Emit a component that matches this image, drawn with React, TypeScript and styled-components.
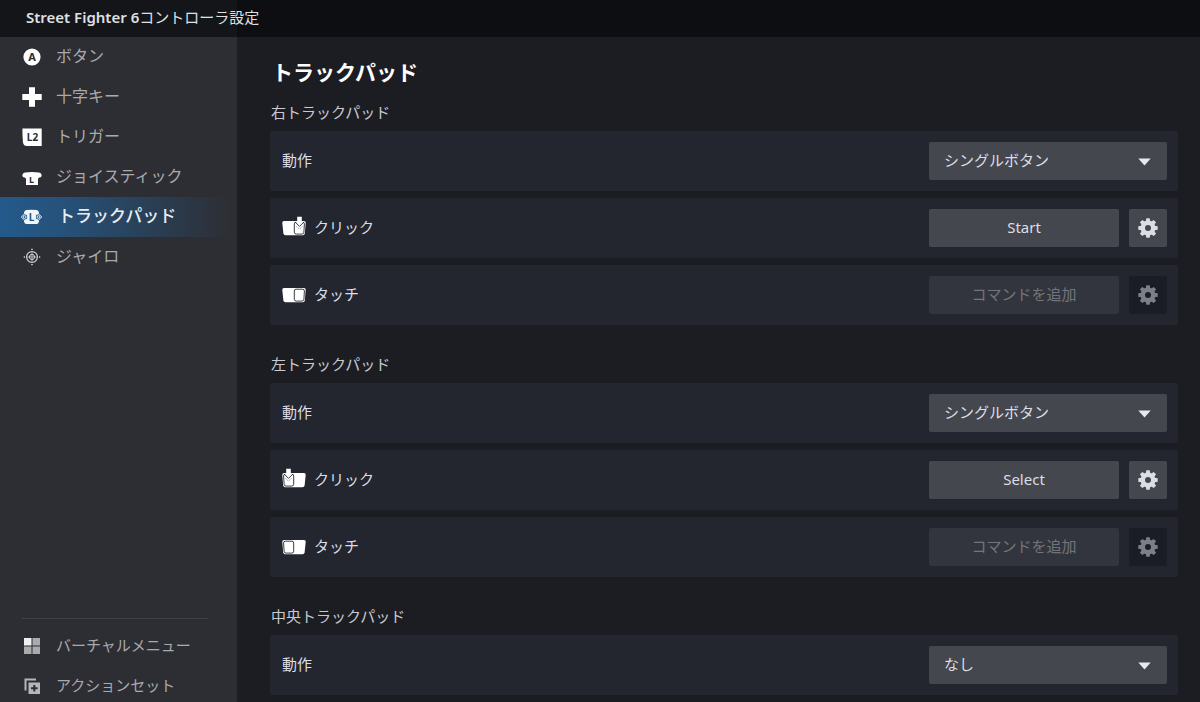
import React, { useId, useState } from "react";
import styled, { createGlobalStyle } from "styled-components";

const GlobalStyle = createGlobalStyle`
  *, *::before, *::after { box-sizing: border-box; }
  body {
    margin: 0;
    background: #1c1d22;
    color: #dcdee3;
    font-family: "Noto Sans", "Noto Sans CJK JP", sans-serif;
    font-size: 15px;
    line-height: 24px;
  }
  button, select { font: inherit; color: inherit; }
`;

const Shell = styled.div`
  display: flex;
  flex-direction: column;
  height: 100vh;
`;

const TitleBar = styled.header`
  flex: none;
  display: flex;
  align-items: center;
  height: 37px;
  padding: 0 26px 3px;
  background: linear-gradient(to right, #141519 237px, #0d0e11 237px);
`;

const AppTitle = styled.p`
  margin: 0;
  color: #dfe0e3;
`;

const GameName = styled.span`
  font-weight: 600;
`;

const Body = styled.div`
  flex: 1;
  display: flex;
  min-height: 0;
`;

const Sidebar = styled.nav`
  flex: none;
  display: flex;
  flex-direction: column;
  justify-content: space-between;
  width: 237px;
  background: #2d2e33;
`;

const NavList = styled.ul`
  margin: 0;
  padding: 0;
  list-style: none;
`;

const FooterList = styled(NavList)`
  display: grid;
  gap: 8px;
  margin: 0 29px 0 22px;
  padding-top: 11px;
  border-top: 1px solid #404146;
`;

const NavLink = styled.a<{ $active?: boolean; $compact?: boolean }>`
  display: flex;
  align-items: center;
  gap: ${(p) => (p.$active ? 16 : 14)}px;
  height: ${(p) => (p.$compact ? 32 : 40)}px;
  padding-left: ${(p) => (p.$compact ? 0 : 22)}px;
  color: ${(p) => (p.$active ? "#e6edf3" : "#a9aaae")};
  font-size: ${(p) => (p.$active ? 17 : p.$compact ? 15 : 16)}px;
  font-weight: ${(p) => (p.$active ? 500 : 400)};
  background: ${(p) =>
    p.$active ? "linear-gradient(to right, #235a8b 0, #26527b 60px, #2d2e33 232px)" : "none"};
  text-decoration: none;
  white-space: nowrap;
  svg { flex: none; }
`;

const NavText = styled.span`
  padding-bottom: 2px;
`;

const Content = styled.main`
  flex: 1;
  min-width: 0;
  padding: 20px 22px 7px 33px;
  overflow: auto;
  scrollbar-width: none;
`;

const PageTitle = styled.h1`
  margin: 0 0 13px 2px;
  color: #fff;
  font-size: 21px;
  font-weight: 700;
  line-height: 30px;
`;

const Section = styled.section`
  & + & { margin-top: 27px; }
`;

const SectionTitle = styled.h2`
  margin: 0 0 7px 1px;
  color: #c9cad0;
  font-size: 15px;
  font-weight: 400;
  line-height: 24px;
`;

const Rows = styled.div`
  display: grid;
  gap: 7px;
`;

const Row = styled.div`
  display: flex;
  align-items: center;
  justify-content: space-between;
  height: 60px;
  padding: 0 11px 0 12px;
  border-radius: 2px;
  background: #23262f;
`;

const ModeLabel = styled.label`
  padding-bottom: 2px;
`;

const RowLabel = styled.span`
  display: flex;
  align-items: center;
  gap: 8px;
  padding-bottom: 2px;
`;

const Controls = styled.div`
  display: flex;
  gap: 10px;
`;

const SelectWrap = styled.div`
  position: relative;
  width: 238px;
  svg {
    position: absolute;
    right: 16px;
    top: 16px;
    pointer-events: none;
  }
`;

const Select = styled.select`
  appearance: none;
  display: block;
  width: 100%;
  height: 38px;
  padding: 0 40px 2px 15px;
  border: 0;
  border-radius: 2px;
  background: #45474e;
`;

const CommandButton = styled.button`
  width: 190px;
  height: 38px;
  padding: 0 0 2px;
  border: 0;
  border-radius: 2px;
  background: #45474e;
  &:disabled {
    background: #32353d;
    color: #73757c;
  }
`;

const GearButton = styled(CommandButton)`
  display: grid;
  place-items: center;
  width: 38px;
  padding: 0;
  &:disabled {
    background: #1b1d26;
    color: #7d7f87;
  }
`;

function Gear() {
  return (
    <svg width="20" height="20" viewBox="-10 -10 20 20" fill="currentColor" aria-hidden="true">
      <circle r="5.2" fill="none" stroke="currentColor" strokeWidth="4.4" />
      {[0, 45, 90, 135, 180, 225, 270, 315].map((a) => (
        <path key={a} d="M-2.2-6.5-1.7-9.7H1.7L2.2-6.5Z" transform={`rotate(${a})`} />
      ))}
    </svg>
  );
}

function Letter({ x, y, size, fill = "#2d2e33", children }: { x: number; y: number; size: number; fill?: string; children: string }) {
  return (
    <text x={x} y={y} fontSize={size} fontWeight="700" textAnchor="middle" fill={fill} fontFamily="Noto Sans, sans-serif">
      {children}
    </text>
  );
}

const iconBox = { width: 20, height: 20, viewBox: "0 0 20 20", "aria-hidden": true } as const;

const ButtonIcon = () => (
  <svg {...iconBox}>
    <circle cx="10" cy="10" r="8.6" fill="#fff" />
    <Letter x={10} y={14} size={11}>A</Letter>
  </svg>
);

const DpadIcon = () => (
  <svg {...iconBox}>
    <path fill="#fff" d="M7 .3h6V7h6.7v6H13v6.7H7V13H.3V7H7Z" />
  </svg>
);

const TriggerIcon = () => (
  <svg {...iconBox}>
    <path fill="#fff" d="M.4 1.5h19.3v17.500H5Q1.600 19 1 15.500Q.4 10 .4 1.500Z" />
    <Letter x={10.5} y={14} size={10}>L2</Letter>
  </svg>
);

const StickIcon = () => (
  <svg {...iconBox}>
    <path
      fill="#fff"
      d="M3 5.500Q10 4.300 17 5.500Q19.700 6 19.700 8.300Q19.600 10.500 17.500 10.600Q16 10.800 16 12.500V18H4V12.500Q4 10.800 2.500 10.600Q.4 10.500.3 8.300Q.3 6 3 5.500Z"
    />
    <Letter x={9.500} y={15.500} size={9}>L</Letter>
  </svg>
);

const PadIcon = () => (
  <svg {...iconBox} overflow="visible">
    <path fill="#f1f7fc" d="M4.500 3Q9 2.500 14.500 3Q16.500 3.200 17 5.500V14.500Q16.500 17 14.500 17H4.500Q2.500 17 2 14.500V5.500Q2.500 3.200 4.500 3Z" />
    <g fill="#35628a" stroke="#e4eef7" strokeWidth="0.900">
      <path d="M2.500 6.800 5.500 8V12L2.500 13.200-.8 10Z" />
      <path d="M16.500 6.800 13.500 8V12L16.500 13.200 19.800 10Z" />
    </g>
    <g fill="none" stroke="#e4eef7" strokeWidth="0.900">
      <circle cx="2.500" cy="10" r="1.400" />
      <circle cx="16.500" cy="10" r="1.400" />
    </g>
    <Letter x={9.500} y={13.500} size={10} fill="#245681">L</Letter>
  </svg>
);

const GyroIcon = () => (
  <svg {...iconBox} fill="none" stroke="#d2d3d6">
    <circle cx="10" cy="10" r="5.400" strokeWidth="1.200" />
    <circle cx="10" cy="10" r="2.600" strokeWidth="1" />
    <path strokeWidth="0.800" d="M10 5.500V14.500M5.500 10H14.500" />
    <g fill="#d2d3d6" stroke="none">
      <path d="M10 1.200 11.100 3H8.900ZM10 18.800 8.900 17H11.100ZM1.200 10 3 8.900V11.100ZM18.800 10 17 11.100V8.900Z" />
    </g>
  </svg>
);

const MenuIcon = () => (
  <svg {...iconBox} fill="#a9aaae">
    <path fill="#f0f0f1" d="M2 2h7.500v7.500H2Z" />
    <path d="M10.500 2H18v7.500H10.500ZM2 10.500H9.500V18H2ZM10.500 10.500H18V18H10.500Z" />
  </svg>
);

const SetIcon = () => (
  <svg {...iconBox}>
    <path fill="none" stroke="#b5b6b9" strokeWidth="2" d="M3.500 14.500V3.500H14" />
    <path fill="#b5b6b9" fillRule="evenodd" d="M6.500 6.500H18V18H6.500ZM11.300 9V11.300H9V13.300H11.300V15.600H13.300V13.300H15.600V11.300H13.300V9Z" />
  </svg>
);

function TrackpadGlyph({ side, press }: { side: "left" | "right"; press?: boolean }) {
  return (
    <svg width="24" height="22" viewBox="0 0 24 22" aria-hidden="true">
      <g transform={side === "left" ? "translate(24 0) scale(-1 1)" : undefined}>
        <path fill="#fff" d="M2 5H22Q23.800 5 23.700 7L22.800 17.500Q22.600 19.300 20.800 19.300H3.500Q1.700 19.300 1.400 17.500L.3 7Q.1 5 2 5Z" />
        <path
          fill="#fff"
          stroke="#23262f"
          strokeWidth="0.900"
          d="M14 6.200H20.500Q22.500 6.200 22.400 8L21.900 16.200Q21.700 18.100 19.900 18.100H14.300Q12.300 18.100 12.300 16.200V8Q12.300 6.200 14 6.200Z"
        />
        {press && (
          <>
            <path fill="#fff" d="M15.200.8H19.800V5.200H22.200L17.500 10 12.800 5.200H15.200Z" />
            <path fill="none" stroke="#23262f" strokeWidth="0.900" d="M13 5.900 17.500 10.400 22 5.900" />
            <path fill="none" stroke="#6c6e76" strokeWidth="0.800" strokeDasharray="1.200 1" d="M14.500 10.500 17.500 13 20.500 10.500" />
          </>
        )}
      </g>
    </svg>
  );
}

function ModeRow({ initial }: { initial: string }) {
  const id = useId();
  const [mode, setMode] = useState(initial);
  return (
    <Row>
      <ModeLabel htmlFor={id}>動作</ModeLabel>
      <SelectWrap>
        <Select id={id} value={mode} onChange={(e) => setMode(e.target.value)}>
          <option>シングルボタン</option>
          <option>なし</option>
        </Select>
        <svg width="13" height="8" viewBox="0 0 13 8" aria-hidden="true">
          <path fill="#e8e9ee" d="M.3.500H12.700L6.500 7.500Z" />
        </svg>
      </SelectWrap>
    </Row>
  );
}

function CommandRow({ side, press, label, command }: { side: "left" | "right"; press?: boolean; label: string; command?: string }) {
  return (
    <Row>
      <RowLabel>
        <TrackpadGlyph side={side} press={press} />
        {label}
      </RowLabel>
      <Controls>
        <CommandButton type="button" disabled={!command}>{command ?? "コマンドを追加"}</CommandButton>
        <GearButton type="button" aria-label={`${label} 設定`} disabled={!command}>
          <Gear />
        </GearButton>
      </Controls>
    </Row>
  );
}

const inputs = [
  { label: "ボタン", Icon: ButtonIcon },
  { label: "十字キー", Icon: DpadIcon },
  { label: "トリガー", Icon: TriggerIcon },
  { label: "ジョイスティック", Icon: StickIcon },
  { label: "トラックパッド", Icon: PadIcon, active: true },
  { label: "ジャイロ", Icon: GyroIcon },
];

const extras = [
  { label: "バーチャルメニュー", Icon: MenuIcon },
  { label: "アクションセット", Icon: SetIcon },
];

export default function App() {
  return (
    <>
      <GlobalStyle />
      <Shell>
        <TitleBar>
          <AppTitle>
            <GameName>Street Fighter 6</GameName>コントローラ設定
          </AppTitle>
        </TitleBar>
        <Body>
          <Sidebar>
            <NavList>
              {inputs.map(({ label, Icon, active }) => (
                <li key={label}>
                  <NavLink href="#" $active={active} aria-current={active ? "page" : undefined}>
                    <Icon />
                    <NavText>{label}</NavText>
                  </NavLink>
                </li>
              ))}
            </NavList>
            <FooterList>
              {extras.map(({ label, Icon }) => (
                <li key={label}>
                  <NavLink href="#" $compact>
                    <Icon />
                    <NavText>{label}</NavText>
                  </NavLink>
                </li>
              ))}
            </FooterList>
          </Sidebar>
          <Content>
            <PageTitle>トラックパッド</PageTitle>
            <Section>
              <SectionTitle>右トラックパッド</SectionTitle>
              <Rows>
                <ModeRow initial="シングルボタン" />
                <CommandRow side="right" press label="クリック" command="Start" />
                <CommandRow side="right" label="タッチ" />
              </Rows>
            </Section>
            <Section>
              <SectionTitle>左トラックパッド</SectionTitle>
              <Rows>
                <ModeRow initial="シングルボタン" />
                <CommandRow side="left" press label="クリック" command="Select" />
                <CommandRow side="left" label="タッチ" />
              </Rows>
            </Section>
            <Section>
              <SectionTitle>中央トラックパッド</SectionTitle>
              <Rows>
                <ModeRow initial="なし" />
              </Rows>
            </Section>
          </Content>
        </Body>
      </Shell>
    </>
  );
}
